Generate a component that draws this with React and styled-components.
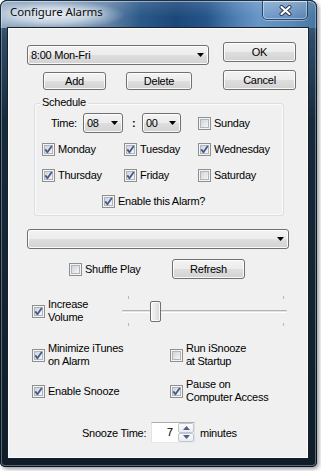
import React from 'react';
import styled, { createGlobalStyle } from 'styled-components';

const FONT = `"Liberation Sans", Tahoma, Arial, sans-serif`;

const Global = createGlobalStyle`
  html, body { margin: 0; padding: 0; background: #ffffff; }
  body { width: 321px; height: 471px; overflow: hidden; }
  * { box-sizing: border-box; }
`;

const Window = styled.div`
  width: 317px;
  height: 467px;
  border-radius: 7px 7px 5px 5px;
  background: linear-gradient(180deg, #4f7397 0px, #2c4a68 40px, #172a3b 120px, #101d29 100%);
  box-shadow: 2px 2px 4px rgba(0, 0, 0, 0.4), inset 0 0 0 1px #0b141b, inset 0 0 0 2px rgba(175, 198, 220, 0.45);
  display: flex;
  flex-direction: column;
  overflow: hidden;
`;

const TitleBar = styled.div`
  height: 28px;
  flex: none;
  display: flex;
  align-items: flex-start;
  padding-left: 9px;
  border-radius: 7px 7px 0 0;
  box-shadow: inset 0 1px 0 rgba(255, 255, 255, 0.45), inset 1px 0 0 rgba(255, 255, 255, 0.3), inset -1px 0 0 rgba(255, 255, 255, 0.3);
  border: 1px solid #1b2f44;
  border-bottom: none;
  background:
    radial-gradient(ellipse 72px 15px at 52px 14px, rgba(236, 242, 248, 0.95) 0%, rgba(225, 234, 243, 0.7) 50%, rgba(225, 234, 243, 0) 100%),
    linear-gradient(180deg, rgba(255, 255, 255, 0.12) 0%, rgba(255, 255, 255, 0) 60%),
    linear-gradient(90deg, #93abc3 0px, #7f9ab6 25px, #6585a8 105px, #2a5888 140px, #1c4879 175px, #25548a 205px, #4f7fb2 235px, #6896c6 258px, #5a89bb 290px, #46759f 316px);
`;

const Title = styled.div`
  font: 11.5px/16px "Noto Sans", "Open Sans", sans-serif;
  letter-spacing: -0.1px;
  color: #0c0c0c;
  padding-top: 3px;
  text-shadow: 0 0 6px rgba(255, 255, 255, 0.9);
`;

const CloseBtn = styled.div`
  margin-left: auto;
  margin-right: 8px;
  width: 46px;
  height: 19px;
  border: 1px solid rgba(18, 38, 64, 0.75);
  border-top: none;
  border-radius: 0 0 5px 5px;
  background: linear-gradient(180deg, rgba(255, 255, 255, 0.2), rgba(255, 255, 255, 0.06));
  box-shadow: inset 0 0 0 1px rgba(255, 255, 255, 0.4), 0 1px 0 rgba(255, 255, 255, 0.35);
  display: flex;
  align-items: center;
  justify-content: center;
`;

const Frame = styled.div`
  flex: 1;
  padding: 0 9px 9px 8px;
`;

const Content = styled.div`
  width: 300px;
  height: 430px;
  background: #f0f0f0;
  box-shadow: 0 0 0 1px #15222e, inset 0 0 0 1px rgba(255, 255, 255, 0.7);
  display: flex;
  flex-direction: column;
  font: 11px ${FONT};
  letter-spacing: -0.25px;
  color: #000;
`;

const TopSection = styled.div`
  display: flex;
  margin-top: 14px;
  padding-left: 19px;
`;

const LeftCol = styled.div`
  width: 182px;
  margin-top: 3px;
  display: flex;
  flex-direction: column;
`;

const ButtonRow = styled.div`
  display: flex;
  margin-top: 7px;
`;

const RightCol = styled.div`
  margin-left: 14px;
  display: flex;
  flex-direction: column;
  gap: 8px;
`;

const Button = styled.button`
  width: ${p => p.$w}px;
  height: ${p => p.$h || 20}px;
  margin: 0 0 0 ${p => p.$ml || 0}px;
  padding: 0;
  border: 1px solid #707070;
  border-radius: 3px;
  background: linear-gradient(180deg, #f3f3f3 0%, #ececec 48%, #dedede 52%, #d2d2d2 100%);
  box-shadow: inset 0 0 0 1px rgba(255, 255, 255, 0.85);
  font: 11px ${FONT};
  letter-spacing: -0.25px;
  color: #000;
`;

const Combo = styled.div`
  width: ${p => p.$w}px;
  height: 20px;
  flex: none;
  margin: ${p => p.$mt || 0}px 0 0 ${p => p.$ml || 0}px;
  border: 1px solid #707070;
  border-radius: 3px;
  background: linear-gradient(180deg, #f3f3f3 0%, #ececec 48%, #dedede 52%, #d2d2d2 100%);
  box-shadow: inset 0 0 0 1px rgba(255, 255, 255, 0.85);
  display: flex;
  align-items: center;
  padding: 0 4px 0 3px;
  line-height: 18px;
`;

const ComboText = styled.span`
  flex: 1;
  white-space: nowrap;
`;

const ArrowSvg = styled.svg`
  flex: none;
  display: block;
`;

const Arrow = () => (
  <ArrowSvg width="7" height="4" viewBox="0 0 7 4">
    <polygon points="0,0 7,0 3.5,4" fill="#000" />
  </ArrowSvg>
);

const Group = styled.div`
  position: relative;
  width: 250px;
  height: 113px;
  margin: 13px 0 0 26px;
  border: 1px solid #d5dfe5;
  border-radius: 3px;
  box-shadow: inset 0 0 0 1px #fbfbfb;
  display: grid;
  grid-template-columns: 82px 74px 1fr;
  grid-auto-rows: 26px;
  align-items: center;
  padding: 6px 0 0 7px;
`;

const GroupLabel = styled.span`
  position: absolute;
  left: 5px;
  top: -8px;
  padding: 0 2px;
  background: #f0f0f0;
  line-height: 13px;
`;

const TimeRow = styled.div`
  grid-column: 1 / 3;
  display: flex;
  align-items: center;
`;

const TimeLabel = styled.span`
  width: 41px;
  padding-left: 9px;
`;

const Colon = styled.span`
  width: 19px;
  padding-left: 9px;
  font-weight: bold;
`;

const CheckLabel = styled.label`
  display: flex;
  align-items: center;
  gap: 3px;
  line-height: 13px;
  white-space: nowrap;
  ${p => (p.$span ? 'grid-column: 1 / -1;' : '')}
  margin-left: ${p => p.$ml || 0}px;
`;

const BoxSvg = styled.svg`
  flex: none;
  display: block;
`;

const CheckBox = ({ checked }) => (
  <BoxSvg width="13" height="13" viewBox="0 0 13 13">
    <defs>
      <linearGradient id="cbInner" x1="0" y1="0" x2="1" y2="1">
        <stop offset="0" stopColor="#cdd2d8" />
        <stop offset="1" stopColor="#f7f7f7" />
      </linearGradient>
    </defs>
    <rect x="0.5" y="0.5" width="12" height="12" fill="#f4f4f4" stroke="#8e8f8f" />
    <rect x="2.5" y="2.5" width="8" height="8" fill="url(#cbInner)" stroke="#b0b5bb" />
    {checked && (
      <path d="M3.3 6.4 L5.4 9.2 L9.8 3" fill="none" stroke="#45598d" strokeWidth="1.8" strokeLinejoin="round" />
    )}
  </BoxSvg>
);

const Check = ({ checked, children, $span, $ml }) => (
  <CheckLabel $span={$span} $ml={$ml}>
    <CheckBox checked={checked} />
    <span>{children}</span>
  </CheckLabel>
);

const ShuffleRow = styled.div`
  display: grid;
  grid-template-columns: 103px 73px;
  align-items: center;
  margin-top: 10px;
  padding-left: 61px;
`;

const VolumeRow = styled.div`
  display: grid;
  grid-template-columns: 90px 165px;
  align-items: center;
  height: 32px;
  margin-top: 16px;
  padding-left: 24px;
`;

const Slider = styled.div`
  position: relative;
  height: 32px;
`;

const Track = styled.div`
  position: absolute;
  left: 0;
  right: 0;
  top: 15px;
  height: 3px;
  border-radius: 1px;
  border-top: 1px solid #b3b3b3;
  background: #e4e4e4;
  border-bottom: 1px solid #ffffff;
`;

const Tick = styled.div`
  position: absolute;
  width: 1px;
  height: 3px;
  background: #b8b8b8;
`;

const Thumb = styled.div`
  position: absolute;
  top: 6px;
  width: 11px;
  height: 21px;
  border: 1px solid #707070;
  border-radius: 2px;
  background: linear-gradient(90deg, #f6f6f6 0%, #e9e9e9 50%, #d6d6d6 100%);
  box-shadow: inset 0 0 0 1px rgba(255, 255, 255, 0.85);
`;

const TwoCol = styled.div`
  display: grid;
  grid-template-columns: 138px 1fr;
  align-items: center;
  min-height: 26px;
  margin-top: ${p => p.$mt}px;
  padding-left: 24px;
`;

const SnoozeRow = styled.div`
  display: flex;
  align-items: center;
  margin-top: 18px;
  padding-left: 74px;
`;

const SnoozeLabel = styled.span`
  width: 69px;
`;

const SpinBox = styled.div`
  width: 44px;
  height: 21px;
  border: 1px solid;
  border-color: #abadb3 #dbdfe6 #e3e9ef #e2e3ea;
  background: #fff;
  display: flex;
`;

const SpinValue = styled.span`
  flex: 1;
  text-align: right;
  padding-right: 5px;
  line-height: 19px;
  font-size: 11.5px;
`;

const SpinButtons = styled.div`
  width: 16px;
  display: flex;
  flex-direction: column;
`;

const SpinBtn = styled.div`
  flex: 1;
  border: 1px solid #bfc6d0;
  border-radius: 2px;
  background: linear-gradient(180deg, #fbfbfb, #e9ecf0);
  display: flex;
  align-items: center;
  justify-content: center;
`;

const MinutesLabel = styled.span`
  margin-left: 5px;
`;

const SpinArrow = ({ up }) => (
  <ArrowSvg width="7" height="4" viewBox="0 0 7 4">
    <polygon points={up ? '0,4 7,4 3.5,0' : '0,0 7,0 3.5,4'} fill="#4d6188" />
  </ArrowSvg>
);

const XIcon = () => (
  <svg width="13" height="11" viewBox="0 0 13 11" style={{ display: 'block' }}>
    <path d="M2.5 2 L10.5 9 M10.5 2 L2.5 9" stroke="#2a3444" strokeWidth="4" strokeLinecap="round" />
    <path d="M2.5 2 L10.5 9 M10.5 2 L2.5 9" stroke="#ffffff" strokeWidth="2.2" strokeLinecap="round" />
  </svg>
);

export default function App() {
  return (
    <>
      <Global />
      <Window>
        <TitleBar>
          <Title>Configure Alarms</Title>
          <CloseBtn>
            <XIcon />
          </CloseBtn>
        </TitleBar>
        <Frame>
          <Content>
            <TopSection>
              <LeftCol>
                <Combo $w={182}>
                  <ComboText>8:00 Mon-Fri</ComboText>
                  <Arrow />
                </Combo>
                <ButtonRow>
                  <Button $w={63} $h={18} $ml={16}>Add</Button>
                  <Button $w={66} $h={18} $ml={20}>Delete</Button>
                </ButtonRow>
              </LeftCol>
              <RightCol>
                <Button $w={73}>OK</Button>
                <Button $w={73}>Cancel</Button>
              </RightCol>
            </TopSection>

            <Group>
              <GroupLabel>Schedule</GroupLabel>
              <TimeRow>
                <TimeLabel>Time:</TimeLabel>
                <Combo $w={40}>
                  <ComboText>08</ComboText>
                  <Arrow />
                </Combo>
                <Colon>:</Colon>
                <Combo $w={39}>
                  <ComboText>00</ComboText>
                  <Arrow />
                </Combo>
              </TimeRow>
              <Check>Sunday</Check>
              <Check checked>Monday</Check>
              <Check checked>Tuesday</Check>
              <Check checked>Wednesday</Check>
              <Check checked>Thursday</Check>
              <Check checked>Friday</Check>
              <Check>Saturday</Check>
              <Check checked $span $ml={60}>Enable this Alarm?</Check>
            </Group>

            <Combo $w={262} $mt={13} $ml={19}>
              <ComboText />
              <Arrow />
            </Combo>

            <ShuffleRow>
              <Check>Shuffle Play</Check>
              <Button $w={73}>Refresh</Button>
            </ShuffleRow>

            <VolumeRow>
              <Check checked>
                Increase
                <br />
                Volume
              </Check>
              <Slider>
                <Tick style={{ left: 6, top: 1 }} />
                <Tick style={{ left: 161, top: 1 }} />
                <Track />
                <Thumb style={{ left: 28 }} />
                <Tick style={{ left: 6, top: 28 }} />
                <Tick style={{ left: 161, top: 28 }} />
              </Slider>
            </VolumeRow>

            <TwoCol $mt={15}>
              <Check checked>
                Minimize iTunes
                <br />
                on Alarm
              </Check>
              <Check>
                Run iSnooze
                <br />
                at Startup
              </Check>
            </TwoCol>

            <TwoCol $mt={10}>
              <Check checked>Enable Snooze</Check>
              <Check checked>
                Pause on
                <br />
                Computer Access
              </Check>
            </TwoCol>

            <SnoozeRow>
              <SnoozeLabel>Snooze Time:</SnoozeLabel>
              <SpinBox>
                <SpinValue>7</SpinValue>
                <SpinButtons>
                  <SpinBtn><SpinArrow up /></SpinBtn>
                  <SpinBtn><SpinArrow /></SpinBtn>
                </SpinButtons>
              </SpinBox>
              <MinutesLabel>minutes</MinutesLabel>
            </SnoozeRow>
          </Content>
        </Frame>
      </Window>
    </>
  );
}
